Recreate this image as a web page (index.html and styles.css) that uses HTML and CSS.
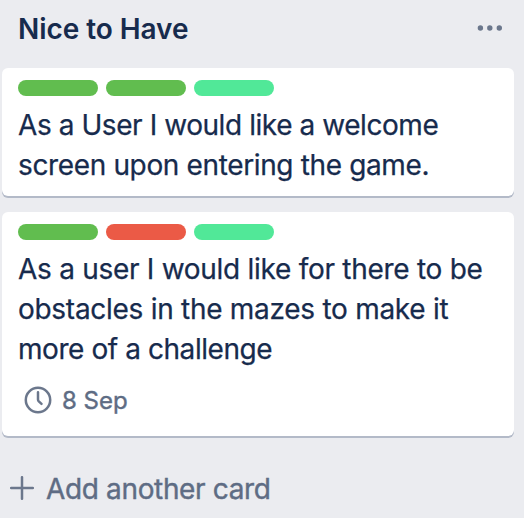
FILE: index.html
```html
<!DOCTYPE html>
<html lang="en">
<head>
<meta charset="utf-8">
<title>Nice to Have</title>
<link rel="stylesheet" href="styles.css">
</head>
<body>
<section class="list">
  <header class="list-header">
    <h2 class="list-title">Nice to Have</h2>
    <svg class="menu" width="26" height="8" viewBox="0 0 26 8"><circle cx="3.4" cy="4" r="2.7"/><circle cx="12.8" cy="4" r="2.7"/><circle cx="22.3" cy="4" r="2.7"/></svg>
  </header>
  <article class="card">
    <div class="labels"><span class="label green"></span><span class="label green"></span><span class="label lime"></span></div>
    <p class="card-title"><span class="line tight">As a User I would like a welcome</span> <span class="line snug">screen upon entering the game.</span></p>
  </article>
  <article class="card">
    <div class="labels"><span class="label green"></span><span class="label red"></span><span class="label lime"></span></div>
    <p class="card-title"><span class="line">As a user I would like for there to be</span> <span class="line">obstacles in the mazes to make it</span> <span class="line tight">more of a challenge</span></p>
    <div class="due">
      <svg width="28" height="28" viewBox="0 0 28 28"><circle cx="14" cy="14" r="12.2"/><path d="M14 6.2v7.3q0 1 .8 1.8l2.7 2.5"/></svg>
      <span>8 Sep</span>
    </div>
  </article>
  <footer class="add">
    <svg width="24" height="24" viewBox="0 0 24 24"><path d="M12 1.2v21.6M1.2 12h21.6"/></svg>
    <span>Add another card</span>
  </footer>
</section>
</body>
</html>
```

FILE: styles.css
```css
* { box-sizing: border-box; }
body { margin: 0; background: #ebecf0; color: #172b4d; font-family: Inter, sans-serif; overflow: hidden; }
.list { height: 518px; padding-left: 2px; padding-right: 10px; }
.list-header { height: 68px; padding: 9px 11px 0 16px; display: flex; justify-content: space-between; align-items: flex-start; }
.list-title { margin: 0; font-size: 28px; line-height: 40px; font-weight: 600; letter-spacing: -0.06px; white-space: nowrap; }
.menu { margin-top: 15px; fill: #6b778c; }
.card { background: #fff; border-radius: 6px; box-shadow: 0 2px 0 #b3bac8; padding: 12px 16px 0; height: 128px; margin-bottom: 16px; }
.card + .card { height: 224px; margin-bottom: 0; }
.labels { display: flex; gap: 8px; margin-bottom: 9px; }
.label { width: 80px; height: 16px; border-radius: 8px; }
.green { background: #61bd4f; }
.red { background: #eb5a46; }
.lime { background: #51e898; }
.card-title { margin: 0; font-size: 28px; line-height: 40px; letter-spacing: -0.28px; -webkit-text-stroke: 0.25px currentColor; }
.line { display: block; white-space: nowrap; }
.tight { letter-spacing: -0.43px; }
.snug { letter-spacing: -0.36px; }
.due { display: flex; align-items: center; gap: 10px; height: 40px; margin: 11px 0 0 6px; color: #5e6c84; font-size: 24px; -webkit-text-stroke: 0.4px currentColor; }
.due svg, .add svg { fill: none; stroke: #6b778c; stroke-width: 2.5; stroke-linecap: round; }
.add { display: flex; align-items: center; gap: 12px; height: 40px; margin: 33px 0 0 8px; color: #5e6c84; font-size: 28px; letter-spacing: -0.35px; white-space: nowrap; -webkit-text-stroke: 0.4px currentColor; }
.add svg { margin-bottom: 2px; }
```
